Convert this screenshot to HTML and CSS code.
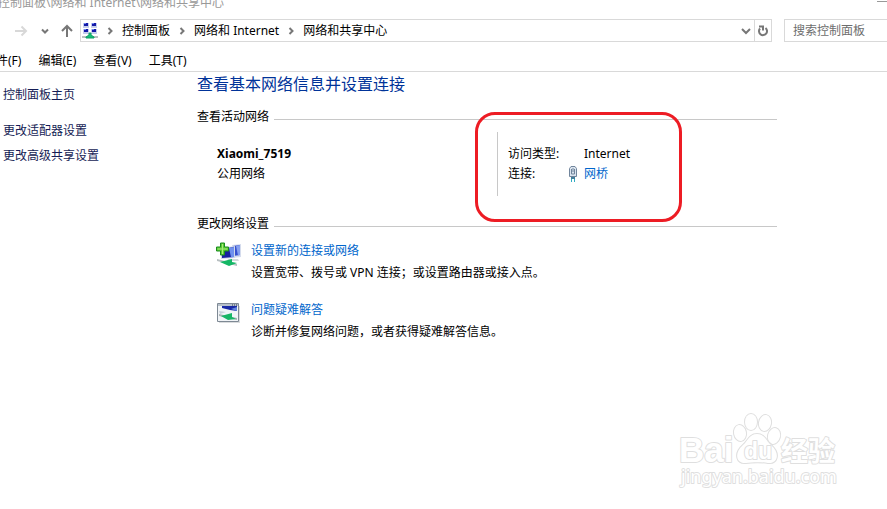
FILE: index.html
```html
<!DOCTYPE html>
<html lang="zh-CN">
<head>
<meta charset="utf-8">
<title>网络和共享中心</title>
<link rel="stylesheet" href="styles.css">
</head>
<body>
<header class="titlebar">
  <span>控制面板\网络和 Internet\网络和共享中心</span>
  <button class="minimize" aria-label="最小化"></button>
</header>
<div class="toolbar">
  <nav class="history">
    <button aria-label="前进" class="forward"><svg width="14" height="14" viewBox="0 0 14 14"><path d="M1 7H12M7.500 2.500L12 7L7.500 11.500"/></svg></button>
    <button aria-label="最近位置"><svg width="8" height="8" viewBox="0 0 8 8"><path d="M1 2.500L4 5.500L7 2.500"/></svg></button>
    <button aria-label="向上"><svg width="14" height="14" viewBox="0 0 14 14"><path d="M7 13V2M2 7L7 2L12 7"/></svg></button>
  </nav>
  <div class="address">
    <svg class="place" width="16" height="18" viewBox="0 0 16 18">
      <g fill="#c4ccec"><path d="M1 1h6v5H1zM9 1h6v5H9zM1 7h6v5H1zM9 7h6v5H9z"/></g>
      <g fill="#1419a8"><path d="M2 1h4v3H2zM10 1h4v3h-4zM2 7h4v3H2zM10 7h4v3h-4z"/></g>
      <g fill="#6d86f0"><path d="M2 1h2v1H2zM10 1h2v1h-2zM2 7h2v1H2zM10 7h2v1h-2z"/></g>
      <path d="M0 14h16v2H0z" fill="#b9c1c1"/><path d="M7 11h2v2l3 2v1H4v-1l3-2z" fill="#12c077" stroke="#12a067"/>
    </svg>
    <svg class="chev" width="6" height="8" viewBox="0 0 6 8"><path d="M1.500 1L4.500 4L1.500 7"/></svg>
    <a href="#">控制面板</a>
    <svg class="chev" width="6" height="8" viewBox="0 0 6 8"><path d="M1.500 1L4.500 4L1.500 7"/></svg>
    <a href="#">网络和 Internet</a>
    <svg class="chev" width="6" height="8" viewBox="0 0 6 8"><path d="M1.500 1L4.500 4L1.500 7"/></svg>
    <a href="#">网络和共享中心</a>
    <button class="drop" aria-label="以前的位置"><svg width="10" height="8" viewBox="0 0 10 8"><path d="M1 2L5 6L9 2"/></svg></button>
    <button class="refresh" aria-label="刷新"><svg width="12" height="12" viewBox="0 0 12 12"><path d="M8.500 3A4 4 0 1 1 3 3.500M2 1.500H6V5.500"/></svg></button>
  </div>
  <input class="search" type="text" placeholder="搜索控制面板" aria-label="搜索控制面板">
</div>
<nav class="menubar">
  <button>文件(F)</button><button>编辑(E)</button><button>查看(V)</button><button>工具(T)</button>
</nav>
<div class="body">
  <aside class="sidebar">
    <a href="#" class="home">控制面板主页</a>
    <a href="#">更改适配器设置</a>
    <a href="#">更改高级共享设置</a>
  </aside>
  <main class="content">
    <h1>查看基本网络信息并设置连接</h1>
    <h2>查看活动网络</h2>
    <section class="network">
      <div class="name"><strong>Xiaomi_7519</strong><span>公用网络</span></div>
      <dl class="status">
        <dt>访问类型:</dt><dd>Internet</dd>
        <dt>连接:</dt>
        <dd class="link"><svg width="10" height="16" viewBox="0 0 10 16"><path d="M1.500 2.500L3 .500H7L8.500 2.500V10.500H1.500z" fill="#dce5ef" stroke="#71859c"/><path d="M3.500 3v5h3V3M5 2v4" fill="none" stroke="#71859c"/><path d="M3 11h4v2H3z" fill="#447f9a"/><path d="M3.500 13v3M6.500 13v3" stroke="#2eacc4"/></svg><a href="#">网桥</a></dd>
      </dl>
    </section>
    <h2>更改网络设置</h2>
    <section class="task">
      <svg width="26" height="26" viewBox="0 0 26 26">
        <path d="M16 3l9-1v13l-9 1z" fill="#d5dced"/><path d="M17 4l7-1v10l-7 1z" fill="#3650ce"/><path d="M20 4l4-1v10l-2 .500z" fill="#86a0ee"/>
        <path d="M5 6l14-2v12L5 17z" fill="#d0d8ea"/><path d="M6 7l12-2v10L6 16z" fill="#1720a0"/><path d="M13 6l5-1v10l-3 .300z" fill="#6f91ed"/>
        <path d="M12 17h10l1 2H11z" fill="#d4d8dd"/>
        <path d="M1 17l20 5v2L1 19z" fill="#b6bec0"/><path d="M4 20l12-3v3l5 1-8 3z" fill="#14b765"/>
        <path d="M4.500 1h4v4h4v4h-4v4h-4V9h-4V5h4z" fill="#5ccb32" stroke="#198b20"/><path d="M6.500 2v10M1.500 7h10" stroke="#a5eb7f"/>
      </svg>
      <div><a href="#">设置新的连接或网络</a><p>设置宽带、拨号或 VPN 连接；或设置路由器或接入点。</p></div>
    </section>
    <section class="task">
      <svg width="26" height="26" viewBox="0 0 26 26">
        <path d="M3 5h21v17H3z" fill="#dadcde"/><path d="M1.500 2.500h21v18h-21z" fill="#f1f4f7" stroke="#7e8994"/><path d="M2 3h20v2H2z" fill="#b7c0ca"/><path d="M16 4h1M18 4h1M20 4h1" stroke="#333f50"/>
        <path d="M6 5h15v5l-7-1-8-2z" fill="#1929a6"/><path d="M15 8l6-2v4z" fill="#6386dc"/><path d="M3 10l7 1-6 2z" fill="#c8d0da"/>
        <path d="M3 13l18 4v2L3 15z" fill="#aab2b4"/><path d="M5 15l11-3v4l4 2-8 1z" fill="#18b666"/>
      </svg>
      <div><a href="#">问题疑难解答</a><p>诊断并修复网络问题，或者获得疑难解答信息。</p></div>
    </section>
  </main>
</div>
<svg class="watermark" width="170" height="88" viewBox="0 0 170 88">
  <g class="halo">
    <ellipse cx="70" cy="29" rx="6" ry="8" transform="rotate(-10 70 29)"/><ellipse cx="81" cy="18" rx="6" ry="8"/><ellipse cx="95" cy="19" rx="6" ry="8" transform="rotate(10 95 19)"/><ellipse cx="104" cy="32" rx="6" ry="8" transform="rotate(15 104 32)"/>
    <path d="M87 30c8 0 9 7 14 11c10 9 6 19-3 18c-5-1-16-1-22 0c-9 1-13-9-3-18c5-4 6-11 14-11z"/>
    <text x="9" y="58" class="brand">Bai</text><text x="74" y="55" class="du">du</text><text x="111" y="57" class="cjk">经验</text>
    <text x="11" y="79" class="url">jingyan.baidu.com</text>
  </g>
</svg>
</body>
</html>
```
FILE: styles.css
```css
*, *::before, *::after { box-sizing: border-box; }
body { margin: 0; min-height: 100vh; overflow: hidden; position: relative; background: #fff; color: #000; font: 12px/20px "Noto Sans", "Noto Sans CJK SC", sans-serif; }
a { color: #0066cc; text-decoration: none; }
button { border: 0; padding: 0; background: none; font: inherit; color: inherit; display: flex; align-items: center; justify-content: center; }
h1, h2, p, dl, dd { margin: 0; font-weight: 400; }
svg { flex: none; }

.titlebar { height: 19px; display: flex; justify-content: space-between; align-items: flex-start; color: #999; }
.titlebar span { margin: -7px 0 0 -2px; white-space: nowrap; }
.minimize { width: 10px; height: 2px; border-bottom: 1px solid #999; }

.toolbar { display: flex; height: 23px; }
.history { width: 80px; display: flex; align-items: center; justify-content: flex-end; gap: 11px; padding-right: 6px; }
.history path, .address button path, .chev path { fill: none; stroke: #777; stroke-width: 2; }
.history .forward { margin-right: 2px; }
.history .forward path { stroke: #d8d8d8; }
.address { flex: 1; display: flex; align-items: center; border: 1px solid #d9d9d9; padding-left: 1px; white-space: nowrap; }
.address a { color: #000; }
.chev { margin: 0 9px; }
.chev path { stroke-width: 2; }
.drop { margin-left: auto; width: 16px; }
.refresh { width: 17px; height: 21px; border-left: 1px solid #d9d9d9; }
.search { width: 103px; margin-left: 12px; border: 1px solid #d9d9d9; border-right: 0; border-radius: 0; padding: 0 8px; font: inherit; background: #fff; }
.search::placeholder { color: #6d6d6d; opacity: 1; }

.menubar { display: flex; gap: 17px; height: 30px; padding-top: 9px; border-bottom: 1px solid #d9d9d9; white-space: nowrap; }
.menubar button { height: 20px; }
.menubar button:first-child { margin-left: -16px; }

.body { display: flex; }
.sidebar { width: 197px; padding: 13px 3px; display: flex; flex-direction: column; gap: 5px; }
.sidebar a { color: #151c55; }
.sidebar .home { margin-bottom: 11px; }
.content { flex: 1; max-width: 580px; }
h1 { font-size: 16px; line-height: 24px; color: #003399; }
h2 { display: flex; align-items: center; gap: 5px; font-size: 12px; line-height: 20px; margin-top: 11px; }
h2::after { content: ""; flex: 1; height: 1px; margin-top: 5px; background: #c8c8c8; }

.network { display: flex; padding: 5px 0 7px 20px; }
.name { width: 280px; padding-top: 12px; display: flex; flex-direction: column; }
.status { position: relative; display: grid; grid-template-columns: 76px auto; align-content: start; height: 64px; padding: 12px 0 0 10px; border-left: 1px solid #c8c8c8; }
.status::after { content: ""; position: absolute; left: -23px; top: -20px; width: 207px; height: 110px; border: 3px solid #ed1c24; border-radius: 20px; pointer-events: none; }
.link { display: flex; align-items: center; gap: 6px; margin-left: -16px; }

.task { display: flex; gap: 9px; padding-left: 19px; margin-top: 7px; }
.task > svg { margin-top: 1px; }
.task p { margin-top: 2px; }
.task + .task { margin-top: 17px; }

.watermark { position: absolute; right: 47px; bottom: 17px; pointer-events: none; }
.halo { fill: #fff; stroke: #dfdfdf; stroke-width: 2px; paint-order: stroke; stroke-linejoin: round; }
.brand { font: bold 35px "Liberation Sans", sans-serif; }
.du { font: bold 23px "Liberation Sans", sans-serif; }
.cjk { font: bold 27px "Noto Sans CJK SC", sans-serif; }
.url { font: 18px "Noto Sans", sans-serif; }
```
